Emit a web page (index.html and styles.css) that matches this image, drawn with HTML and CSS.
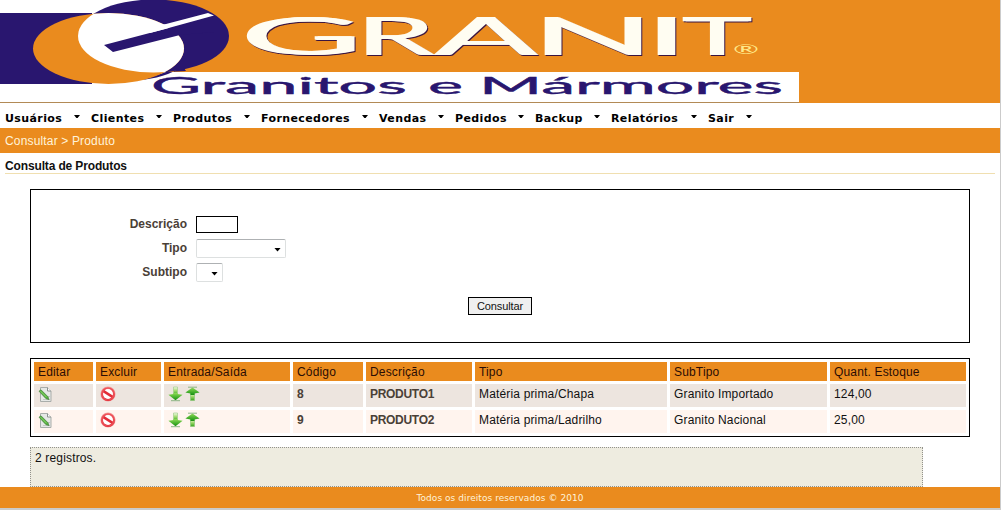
FILE: index.html
```
<!DOCTYPE html>
<html lang="pt-BR">
<head>
<meta charset="utf-8">
<title>Granit - Consulta de Produtos</title>
<link rel="stylesheet" href="styles.css">
</head>
<body>
<svg class="sprites" width="0" height="0" aria-hidden="true">
  <defs>
    <linearGradient id="green" x1="0" y1="0" x2="0" y2="1"><stop offset="0" stop-color="#8fdc56"/><stop offset="1" stop-color="#149010"/></linearGradient>
    <linearGradient id="shaft" x1="0" y1="0" x2="0" y2="1"><stop offset="0" stop-color="#f4fbe8"/><stop offset=".45" stop-color="#a5dc70"/><stop offset="1" stop-color="#35a51c"/></linearGradient>
    <linearGradient id="red" x1="0" y1="0" x2="0" y2="1"><stop offset="0" stop-color="#f68484"/><stop offset="1" stop-color="#d91f2b"/></linearGradient>
    <symbol id="edit" viewBox="0 0 14 15">
      <path d="M2.500.5h7l3.500 3.500v10.500H2.500z" fill="#e6e8e6" stroke="#a9adaa"/>
      <path d="M9.500.5V4H13" fill="#fff" stroke="#8c918e"/>
      <path d="M5 12.500h7M9 9.500h3" stroke="#c4c8c4"/>
      <path d="M1 4.200 3 2.800l7 7 1 2.800-3-.9z" fill="#4fae38" stroke="#4b7f45" stroke-width=".7"/>
      <path d="m2.600 4.200 6 6" stroke="#a1e57c" stroke-width=".8"/>
    </symbol>
    <symbol id="deny" viewBox="0 0 16 16">
      <circle cx="8" cy="8" r="7.600" fill="#f3a1a1"/>
      <circle cx="8" cy="8" r="7" fill="url(#red)"/>
      <circle cx="8" cy="8" r="5" fill="#fff"/>
      <path d="m3.500 5.200 9 5.600" stroke="#e22d38" stroke-width="2.600"/>
      <circle cx="8" cy="8" r="6" fill="none" stroke="#ed4d55" stroke-width="1.200"/>
    </symbol>
    <symbol id="down" viewBox="0 0 15 16">
      <path d="M5.500 1h4v8h-4z" fill="url(#shaft)" stroke="#a3cf8d" stroke-width=".7"/>
      <path d="M.4 8.800 5.500 8V7h4v1l5.100.8-7.100 5.400z" fill="url(#green)"/>
      <path d="M3 14.700h9" stroke="#8db585"/>
    </symbol>
    <symbol id="up" viewBox="0 0 15 16">
      <path d="M5.500 7h4v7.500h-4z" fill="url(#shaft)" stroke="#8fc47b" stroke-width=".7"/>
      <path d="M7.500 1.400 14.600 6.600 9.500 7.400V9h-4V7.400L.4 6.600z" fill="url(#green)"/>
      <path d="M3 1.200h9" stroke="#8db585"/>
    </symbol>
  </defs>
</svg>
<div class="page">
  <header class="banner">
    <svg class="logo" width="1000" height="103" viewBox="0 0 1000 103" role="img" aria-label="Granit">
      <defs>
        <clipPath id="blueDisc"><ellipse cx="153.500" cy="36" rx="75.500" ry="36.500"/></clipPath>
      </defs>
      <rect width="1000" height="103" fill="#ea8b1e"/>
      <rect width="154" height="103" fill="#fff"/>
      <rect y="72" width="799" height="30" fill="#fff"/>
      <rect y="13" width="92" height="71" fill="#29166f"/>
      <path d="M182 65c-6 7-18 12-40 15l24-8 20-1z" fill="#29166f"/>
      <ellipse cx="153.500" cy="36" rx="75.500" ry="36.500" fill="#29166f"/>
      <ellipse cx="108.500" cy="48.500" rx="75.500" ry="35.500" fill="#ea8b1e"/>
      <g clip-path="url(#blueDisc)">
        <ellipse cx="108.500" cy="48.500" rx="75.500" ry="35.500" fill="#fff"/>
      </g>
      <path d="m104 45 61-16 49-14v17l-34 3-67 17z" fill="#29166f"/>
      <path d="m150 26 16-2 42-11 6 2.500-49 13.500-15 4z" fill="#fff"/>
      <rect y="102" width="799" height="1" fill="#b28a56"/>
      <text class="brand" y="55"><tspan x="239" textLength="122" lengthAdjust="spacingAndGlyphs">G</tspan><tspan x="355" textLength="78" lengthAdjust="spacingAndGlyphs">R</tspan><tspan x="433" textLength="103" lengthAdjust="spacingAndGlyphs">A</tspan><tspan x="530" textLength="123" lengthAdjust="spacingAndGlyphs">N</tspan><tspan x="644" textLength="42" lengthAdjust="spacingAndGlyphs">I</tspan><tspan x="681" textLength="69" lengthAdjust="spacingAndGlyphs">T</tspan></text>
      <text class="mark" x="733" y="54" textLength="26" lengthAdjust="spacingAndGlyphs">®</text>
      <text class="tagline" y="94"><tspan x="151" textLength="256" lengthAdjust="spacingAndGlyphs">Granitos</tspan> <tspan x="428" textLength="35" lengthAdjust="spacingAndGlyphs">e</tspan> <tspan x="479" textLength="304" lengthAdjust="spacingAndGlyphs">Mármores</tspan></text>
    </svg>
  </header>
  <nav class="menu">
    <a>Usuários</a><a>Clientes</a><a>Produtos</a><a>Fornecedores</a><a>Vendas</a><a>Pedidos</a><a>Backup</a><a>Relatórios</a><a>Sair</a>
  </nav>
  <div class="crumbs">Consultar &gt; Produto</div>
  <h1 class="title">Consulta de Produtos</h1>
  <form class="filter">
    <div class="field"><label>Descrição</label><span class="input"></span></div>
    <div class="field"><label>Tipo</label><span class="select wide"></span></div>
    <div class="field"><label>Subtipo</label><span class="select"></span></div>
    <button class="submit" type="button">Consultar</button>
  </form>
  <table class="grid">
    <colgroup><col class="c1"><col class="c2"><col class="c3"><col class="c4"><col class="c5"><col class="c6"><col class="c7"><col class="c8"></colgroup>
    <thead><tr><th>Editar</th><th>Excluir</th><th>Entrada/Saída</th><th>Código</th><th>Descrição</th><th>Tipo</th><th>SubTipo</th><th>Quant. Estoque</th></tr></thead>
    <tbody>
      <tr><td><svg class="edit"><use href="#edit"/></svg></td><td><svg class="deny"><use href="#deny"/></svg></td><td><svg class="arrow"><use href="#down"/></svg><svg class="arrow"><use href="#up"/></svg></td><td class="strong">8</td><td class="strong">PRODUTO1</td><td>Matéria prima/Chapa</td><td>Granito Importado</td><td>124,00</td></tr>
      <tr><td><svg class="edit"><use href="#edit"/></svg></td><td><svg class="deny"><use href="#deny"/></svg></td><td><svg class="arrow"><use href="#down"/></svg><svg class="arrow"><use href="#up"/></svg></td><td class="strong">9</td><td class="strong">PRODUTO2</td><td>Matéria prima/Ladrilho</td><td>Granito Nacional</td><td>25,00</td></tr>
    </tbody>
  </table>
  <div class="count">2 registros.</div>
  <footer class="footer">Todos os direitos reservados © 2010</footer>
</div>
</body>
</html>
```
FILE: styles.css
```
* { box-sizing: border-box; }
body { margin: 0; background: #cbcbcb; color: #111; font: 12px/14px "Liberation Sans", Arial, sans-serif; letter-spacing: .16px; overflow: hidden; }
.sprites { position: absolute; }
.page { width: 1000px; height: 508px; background: #fff; display: flex; flex-direction: column; }
.banner { height: 103px; }
.logo { display: block; letter-spacing: 0; }
.brand { font: 400 53px Lato, sans-serif; fill: #fffdf2; filter: drop-shadow(3px 0 0 #fffdf2) drop-shadow(1.500px 1px 0 #3a1540); }
.mark { font: 14px Lato, sans-serif; fill: #ffe98a; }
.tagline { font: 400 24px Lato, sans-serif; fill: #29166f; stroke: #29166f; stroke-width: .4px; }

.menu { height: 25px; padding: 8px 0 0 5px; display: grid; grid-template-columns: 86px 82px 88px 118px 76px 80px 76px 97px 48px; font: bold 11px/15px "DejaVu Sans", Verdana, sans-serif; letter-spacing: .4px; color: #000; }
.menu a { display: flex; justify-content: space-between; padding-right: 11px; }
.menu a::after { content: ""; width: 6px; height: 3px; margin-top: 4px; background: #000; clip-path: polygon(0 0, 100% 0, 60% 100%, 40% 100%); }
.menu a:last-child { padding-right: 4px; }

.crumbs { height: 25px; padding: 6px 5px; background: #ea8b1e; color: #fff3da; }
.title { height: 21px; margin: 0 5px; padding-top: 6px; border-bottom: 1px solid #f0dfb0; font-size: 12px; line-height: 14px; letter-spacing: -.14px; color: #111; }

.filter { width: 940px; height: 154px; margin: 15px 0 0 30px; padding: 22px 0 0; border: 1px solid #000; display: flex; flex-direction: column; }
.field { height: 24px; display: flex; align-items: center; gap: 9px; }
.field label { width: 156px; text-align: right; font-weight: bold; letter-spacing: 0; color: #4a4037; }
.input { width: 42px; height: 17px; border: 1px solid #000; }
.select { width: 27px; height: 19px; border: 1px solid #dde0e0; border-top-color: #aeb1b3; border-radius: 2px; display: flex; justify-content: flex-end; align-items: center; padding: 3px 4px 0 0; }
.select::after { content: ""; width: 7px; height: 4px; background: #000; clip-path: polygon(0 0, 100% 0, 50% 100%); }
.wide { width: 90px; }
.submit { width: 64px; height: 18px; margin: 13px 0 0 437px; padding: 0; border: 1px solid #000; background: #efefef; color: #111; font: 11px/16px "Liberation Sans", Arial, sans-serif; letter-spacing: -.1px; }

.grid { width: 940px; margin: 15px 0 0 30px; border: 1px solid #000; border-spacing: 3px; table-layout: fixed; }
.c1 { width: 59px; } .c2 { width: 65px; } .c3 { width: 126px; } .c4 { width: 70px; }
.c5 { width: 106px; } .c6 { width: 192px; } .c7 { width: 157px; } .c8 { width: 136px; }
.grid th { height: 19px; padding: 0 4px; background: #ea8b1e; color: #2a0d05; font-weight: normal; text-align: left; }
.grid td { height: 23px; padding: 3px 4px 0; vertical-align: top; background: #ede5df; }
.grid tbody tr:last-child td { background: #fff4ee; }
.grid .strong { font-weight: bold; letter-spacing: -.3px; color: #4a4037; }
.grid svg { display: block; float: left; }
.edit { width: 14px; height: 15px; }
.grid .deny { width: 16px; height: 16px; margin-top: -1px; }
.grid .arrow { width: 15px; height: 16px; margin: -1px 2px 0 0; }

.count { width: 893px; height: 40px; margin: 10px 0 0 30px; padding: 3px 4px; border: 1px dotted #92928c; background: #eeece0; }
.footer { height: 21px; background: #ea8b1e; color: #fff3da; text-align: center; font: 9px/22px "DejaVu Sans", Verdana, sans-serif; letter-spacing: .06px; }
```
